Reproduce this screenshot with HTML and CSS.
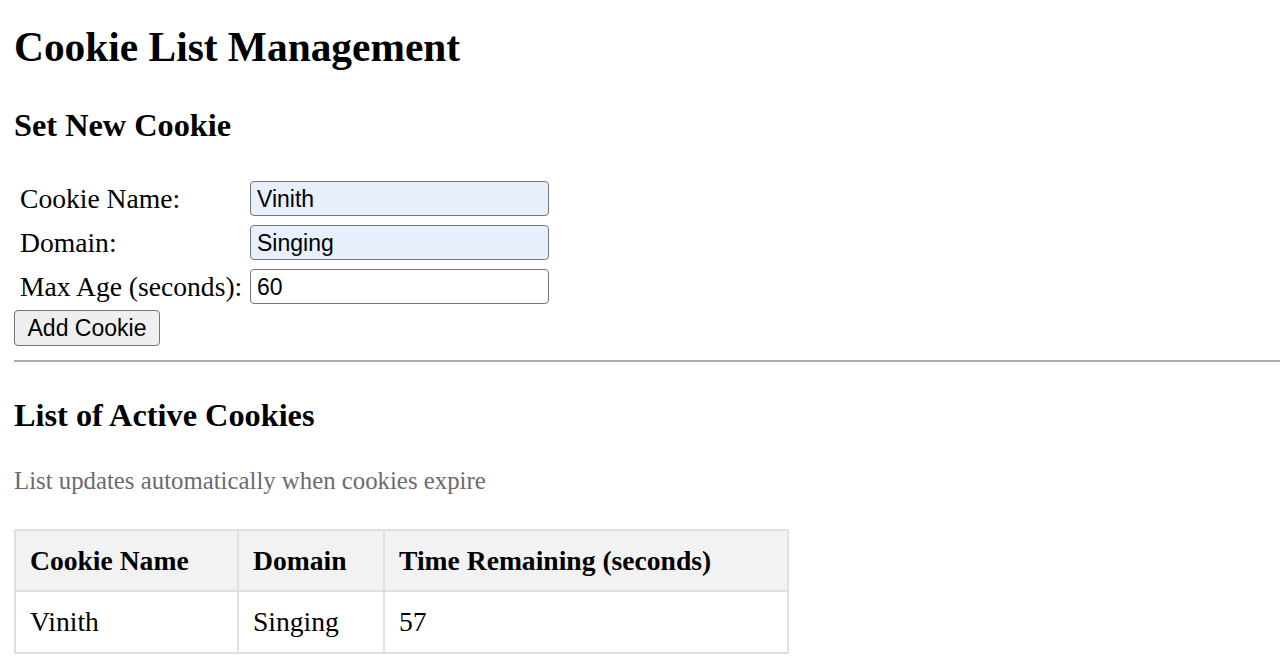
FILE: index.html
```html
<!DOCTYPE html>
<html lang="en">
<head>
<meta charset="utf-8">
<title>Cookie List Management</title>
<link rel="stylesheet" href="styles.css">
</head>
<body>
  <h1 class="title">Cookie List Management</h1>

  <h2 class="section-title">Set New Cookie</h2>
  <div class="cookie-form">
    <label class="form-label" for="cname">Cookie Name:</label>
    <input class="form-input autofilled" id="cname" type="text" value="Vinith">
    <label class="form-label" for="cdomain">Domain:</label>
    <input class="form-input autofilled" id="cdomain" type="text" value="Singing">
    <label class="form-label" for="cage">Max Age (seconds):</label>
    <input class="form-input" id="cage" type="text" value="60">
  </div>
  <button class="add-btn" type="button">Add Cookie</button>

  <div class="divider"></div>

  <h2 class="section-title list-title">List of Active Cookies</h2>
  <p class="hint">List updates automatically when cookies expire</p>

  <table class="cookie-table">
    <colgroup>
      <col class="col-name">
      <col class="col-domain">
      <col class="col-time">
    </colgroup>
    <thead>
      <tr>
        <th>Cookie Name</th>
        <th>Domain</th>
        <th>Time Remaining (seconds)</th>
      </tr>
    </thead>
    <tbody>
      <tr>
        <td>Vinith</td>
        <td>Singing</td>
        <td>57</td>
      </tr>
    </tbody>
  </table>
</body>
</html>
```
FILE: styles.css
```css
html, body {
  background: #ffffff;
}

body {
  margin: 0 0 0 14px;
  padding: 0;
  font-family: "Liberation Serif", "Times New Roman", serif;
  font-size: 27.6px;
  color: #000;
}

.title {
  font-size: 41.4px;
  font-weight: bold;
  line-height: 48px;
  margin: 23px 0 0;
}

.section-title {
  font-size: 32.3px;
  font-weight: bold;
  line-height: 37px;
  margin: 36px 0 0;
}

.cookie-form {
  display: grid;
  grid-template-columns: 230px 299px;
  column-gap: 0;
  row-gap: 9px;
  align-items: center;
  margin-top: 37px;
  padding-left: 6px;
}

.form-label {
  line-height: 32px;
  white-space: nowrap;
}

.form-input {
  box-sizing: border-box;
  width: 299px;
  height: 35px;
  margin: 0;
  padding: 1px 6px 0;
  font-family: "Liberation Sans", Arial, sans-serif;
  font-size: 23px;
  color: #000;
  background: #ffffff;
  border: 1.5px solid #767676;
  border-radius: 4px;
  outline: none;
}

.form-input.autofilled {
  background: #e8f0fe;
}

.add-btn {
  display: block;
  box-sizing: border-box;
  width: 146px;
  height: 36px;
  margin: 6px 0 0;
  padding: 0 10px;
  font-family: "Liberation Sans", Arial, sans-serif;
  font-size: 23px;
  color: #000;
  background: #efefef;
  border: 1.5px solid #767676;
  border-radius: 4px;
}

.divider {
  margin: 14px 0 0;
  height: 2px;
  background: #adadad;
}

.list-title {
  margin-top: 35px;
}

.hint {
  font-size: 24.8px;
  line-height: 28px;
  color: #6b6b6b;
  margin: 33px 0 0;
}

.cookie-table {
  margin-top: 34px;
  width: 773px;
  table-layout: fixed;
  border-collapse: collapse;
  font-size: 27.6px;
}

.cookie-table th,
.cookie-table td {
  border: 2px solid #e0e0e0;
  padding: 14px 14px 13px;
  text-align: left;
  line-height: 32px;
}

.cookie-table td {
  padding-bottom: 14px;
}

.cookie-table th {
  background: #f2f2f2;
  font-weight: bold;
}

.col-name {
  width: 223px;
}

.col-domain {
  width: 146px;
}

.col-time {
  width: 404px;
}
```
